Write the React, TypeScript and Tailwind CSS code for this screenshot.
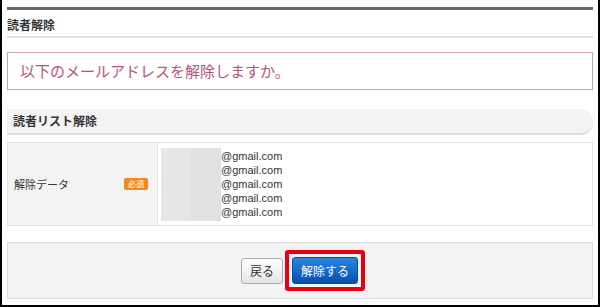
import React from 'react';

const font = { fontFamily: '"Noto Sans CJK JP", "Noto Sans", sans-serif' };

export default function App() {
    const emails = ['@gmail.com', '@gmail.com', '@gmail.com', '@gmail.com', '@gmail.com'];

    return (
        <div className="w-[600px] h-[307px] bg-white border-l-2 border-r-2 border-b-2 border-black overflow-hidden" style={font}>
            <div className="pl-[5px] pr-[5px] pt-[7px]">
                {/* Page title */}
                <div className="h-[3px] bg-[#666]"></div>
                <div className="h-[28px] flex items-center pt-[4px] border-b-2 border-[#e2e2e2] text-[12px] font-bold text-[#333]">
                    読者解除
                </div>

                {/* Confirm message */}
                <div className="mt-[14px] h-[38px] flex items-center pl-[12px] border border-[#cf9fb5] text-[15px] text-[#b5527f]">
                    以下のメールアドレスを解除しますか。
                </div>

                {/* Section header */}
                <div className="mt-[19px] h-[26px] flex items-center pl-[6px] bg-[#f3f3f3] rounded-r-[12px] border-b-2 border-[#dedede] text-[12px] font-bold text-[#333]">
                    読者リスト解除
                </div>

                {/* Data table */}
                <div className="mt-[7px] flex border border-[#e3e3e3] h-[84px]">
                    <div className="w-[150px] bg-[#f3f3f3] border-r border-[#e3e3e3] flex items-center justify-between pl-[6px] pr-[9px]">
                        <span className="text-[11px] text-[#333]">解除データ</span>
                        <span className="bg-[#f08a1c] text-white text-[8px] leading-none px-[4px] py-[2px] rounded-[2px]">必須</span>
                    </div>
                    <div className="flex-1 flex items-center pl-[3px]">
                        <div className="flex h-[73px]">
                            <div className="w-[30px] bg-[#e6e6e6]"></div>
                            <div className="w-[30px] bg-[#e1e1e1]"></div>
                        </div>
                        <div className="flex flex-col text-[11px] leading-[14px] text-[#333]" style={{ fontFamily: '"Liberation Sans", Arial, sans-serif' }}>
                            {emails.map((e, i) => (
                                <span key={i}>{e}</span>
                            ))}
                        </div>
                    </div>
                </div>

                {/* Footer actions */}
                <div className="mt-[16px] h-[57px] bg-[#f3f3f3] border border-[#dcdcdc] flex items-center justify-center gap-[2px] pl-[6px]">
                    <button className="w-[42px] h-[26px] rounded-[3px] border border-[#aaa] bg-gradient-to-b from-white to-[#e4e4e4] text-[12px] text-[#333]">
                        戻る
                    </button>
                    <div className="p-[3px] border-[4px] border-[#e60012] rounded-[3px]">
                        <button className="w-[66px] h-[27px] rounded-[3px] bg-gradient-to-b from-[#2a86e0] to-[#0550ad] border border-[#0a4f9e] text-[12px] text-white">
                            解除する
                        </button>
                    </div>
                </div>
            </div>
        </div>
    );
}
